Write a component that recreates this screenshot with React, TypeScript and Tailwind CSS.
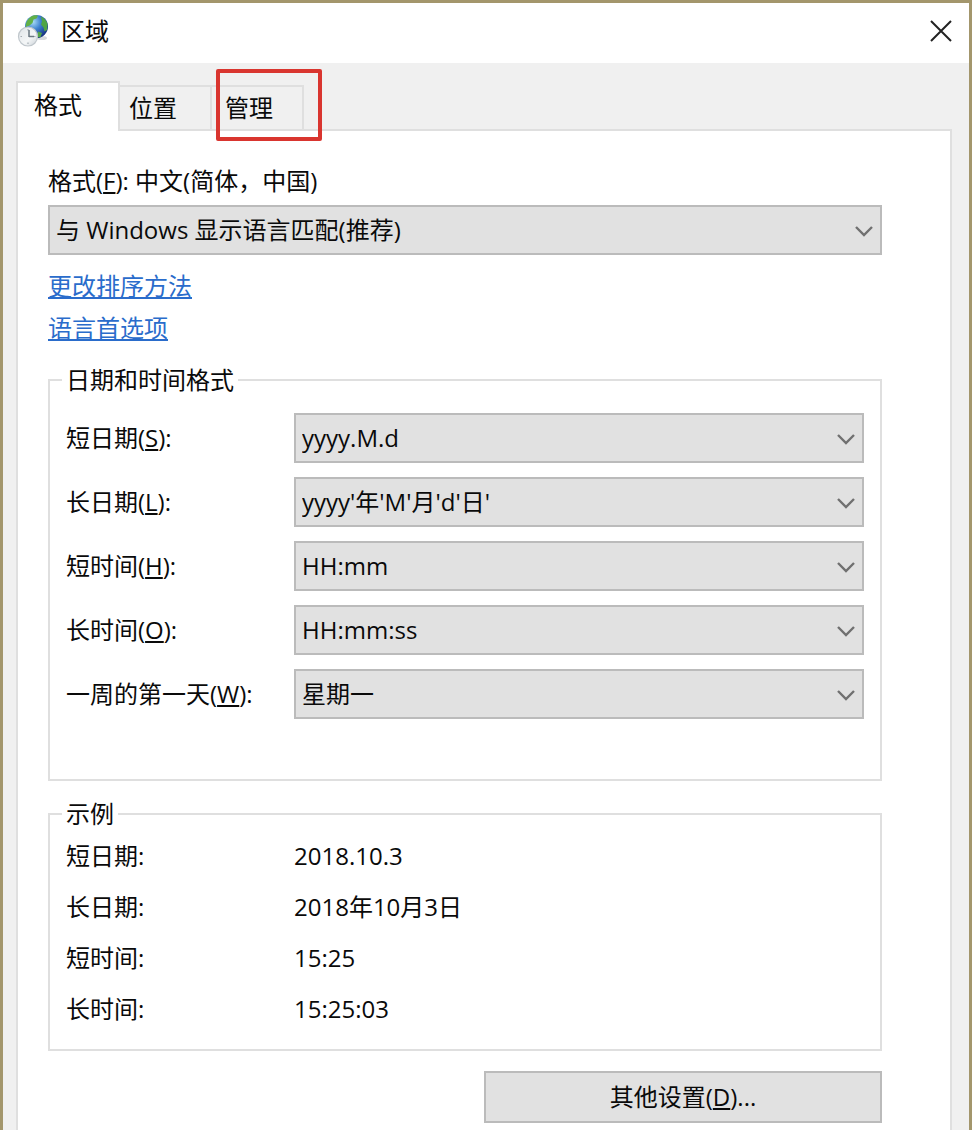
import React, { useState } from 'react';
import clsx from 'clsx';

const TABS = [
  { id: 'formats', label: '格式' },
  { id: 'location', label: '位置' },
  { id: 'admin', label: '管理' },
];

const FORMAT_FIELDS = [
  { id: 'short-date', label: '短日期', hotkey: 'S', value: 'yyyy.M.d' },
  { id: 'long-date', label: '长日期', hotkey: 'L', value: "yyyy'年'M'月'd'日'" },
  { id: 'short-time', label: '短时间', hotkey: 'H', value: 'HH:mm' },
  { id: 'long-time', label: '长时间', hotkey: 'O', value: 'HH:mm:ss' },
  { id: 'first-day', label: '一周的第一天', hotkey: 'W', value: '星期一' },
];

const EXAMPLES = [
  { label: '短日期:', value: '2018.10.3' },
  { label: '长日期:', value: '2018年10月3日' },
  { label: '短时间:', value: '15:25' },
  { label: '长时间:', value: '15:25:03' },
];

const RegionIcon: React.FC = () => (
  <svg className="h-9 w-8" viewBox="0 0 32 36" aria-hidden="true">
    <defs>
      <radialGradient id="globe" cx="0.35" cy="0.3" r="0.75">
        <stop offset="0" stopColor="#a9dcf5" />
        <stop offset="0.45" stopColor="#3f83d0" />
        <stop offset="1" stopColor="#15307f" />
      </radialGradient>
      <linearGradient id="dial" x1="0" y1="0" x2="1" y2="1">
        <stop offset="0" stopColor="#dfe4e8" />
        <stop offset="0.6" stopColor="#f4f6f7" />
        <stop offset="1" stopColor="#c9d0d6" />
      </linearGradient>
    </defs>
    <ellipse cx="25" cy="25" rx="5" ry="2" fill="#d5d9dc" />
    <circle cx="19.500" cy="13.500" r="11.500" fill="url(#globe)" />
    <path d="M9 10.500c1-4 4-7 8-8.300l4 .3-1.500 3-3 1-1 3.500-3 2.500-2.500 1-1.500 2z" fill="#62b146" />
    <path d="M24 3.500c3 1.500 5.500 4 6.500 7.500l-.5 6-2.500 1.500-1-4-2.500-3 1-3z" fill="#4fa544" />
    <path d="M21 18.500l4 1.500-1.500 4-3.500.5z" fill="#53a548" />
    <circle cx="11" cy="23.500" r="9.500" fill="url(#dial)" stroke="#c0c7cc" strokeWidth="1.200" />
    <path d="M11 16v1.500M11 29.500v1.500M3.500 23.500h1.500M17 23.500h1.500" stroke="#a5adb3" strokeWidth="1.200" />
    <path d="M12 17v7M12 23.500h5" stroke="#6b7882" strokeWidth="1.500" fill="none" />
  </svg>
);

// Letter underlined for its Alt shortcut
const Hotkey: React.FC<{ letter: string }> = ({ letter }) => (
  <>
    (<span className="underline decoration-2 underline-offset-2">{letter}</span>)
  </>
);

const ComboBox: React.FC<{ id: string; value: string }> = ({ id, value }) => (
  <div className="relative min-w-0 flex-1">
    <select
      id={id}
      className="block h-[50px] w-full appearance-none border-2 border-[#bbbbbb] bg-[#e1e1e1] pr-12 pl-1.5"
    >
      <option>{value}</option>
    </select>
    <svg
      className="pointer-events-none absolute top-5 right-2 h-3 w-5"
      viewBox="0 0 20 12"
      fill="none"
      stroke="#707070"
      strokeWidth="2.400"
      aria-hidden="true"
    >
      <path d="M2 2l8 8 8-8" />
    </svg>
  </div>
);

const App: React.FC = () => {
  const [activeTab, setActiveTab] = useState('formats');

  return (
    <div
      lang="zh-CN"
      className="flex min-h-screen flex-col border-x-3 border-t-3 border-[#a3966c] bg-[#f0f0f0] font-['Open_Sans','Noto_Sans_CJK_SC',sans-serif] text-2xl leading-8 text-[#0a0a0a]"
    >
      {/* Title bar */}
      <header className="flex h-15 items-center bg-white pr-3 pb-1 pl-3.5">
        <RegionIcon />
        <h1 className="ml-3 flex-1">区域</h1>
        <button type="button" aria-label="关闭" className="flex size-8 items-center justify-center">
          <svg className="size-6" viewBox="0 0 24 24" stroke="#222222" strokeWidth="2" fill="none">
            <path d="M2 2l20 20M22 2l-20 20" />
          </svg>
        </button>
      </header>

      <main className="flex flex-1 flex-col pt-[18px] pr-[17px] pl-[13px]">
        {/* Tabs */}
        <div role="tablist" className="flex items-end">
          {TABS.map((tab) => (
            <div key={tab.id} className="relative">
              <button
                type="button"
                role="tab"
                aria-selected={activeTab === tab.id}
                onClick={() => setActiveTab(tab.id)}
                className={clsx(
                  'block border-[#dfdfdf]',
                  activeTab === tab.id
                    ? 'relative z-10 -mb-0.5 h-[50px] w-26 border-x-2 border-t-2 bg-white pr-5 pb-1'
                    : 'h-11 w-23 border-t-2 border-r-2',
                  tab.id === 'location' && 'pr-6',
                  tab.id === 'admin' && 'pr-4'
                )}
              >
                {tab.label}
              </button>
              {/* Highlight around the admin tab */}
              {tab.id === 'admin' && (
                <div className="pointer-events-none absolute -top-4 left-1 z-20 h-18 w-[106px] rounded-xs border-4 border-[#d9352f]" />
              )}
            </div>
          ))}
        </div>

        {/* Formats page */}
        <div role="tabpanel" className="flex-1 border-x-2 border-t-2 border-[#dfdfdf] bg-white pt-[34px] pr-[68px] pb-1 pl-[30px]">
          <label htmlFor="format" className="mb-2 block">
            格式
            <Hotkey letter="F" />: 中文(简体，中国)
          </label>
          <div className="flex">
            <ComboBox id="format" value="与 Windows 显示语言匹配(推荐)" />
          </div>

          <nav className="mt-[15px] flex flex-col items-start gap-2.5 text-[#2a6ccb]">
            <a href="#sort" className="underline decoration-2 underline-offset-2">更改排序方法</a>
            <a href="#language" className="underline decoration-2 underline-offset-2">语言首选项</a>
          </nav>

          <fieldset className="mt-5 border-2 border-[#dfdfdf] pr-4 pb-15 pl-3">
            <legend className="px-1">日期和时间格式</legend>
            <div className="flex flex-col gap-3.5 pt-[17px] pl-1">
              {FORMAT_FIELDS.map((field) => (
                <div key={field.id} className="flex items-center">
                  <label htmlFor={field.id} className="w-57 shrink-0">
                    {field.label}
                    <Hotkey letter={field.hotkey} />:
                  </label>
                  <ComboBox id={field.id} value={field.value} />
                </div>
              ))}
            </div>
          </fieldset>

          <fieldset className="mt-[17px] border-2 border-[#dfdfdf] pr-4 pb-[15px] pl-3">
            <legend className="px-1">示例</legend>
            <dl className="pl-1">
              {EXAMPLES.map((row) => (
                <div key={row.label} className="flex leading-[51px]">
                  <dt className="w-57 shrink-0">{row.label}</dt>
                  <dd>{row.value}</dd>
                </div>
              ))}
            </dl>
          </fieldset>

          <div className="mt-5 flex justify-end">
            <button type="button" className="h-13 w-[398px] border-2 border-[#bbbbbb] bg-[#e1e1e1]">
              其他设置
              <Hotkey letter="D" />...
            </button>
          </div>
        </div>
      </main>
    </div>
  );
};

export default App;
